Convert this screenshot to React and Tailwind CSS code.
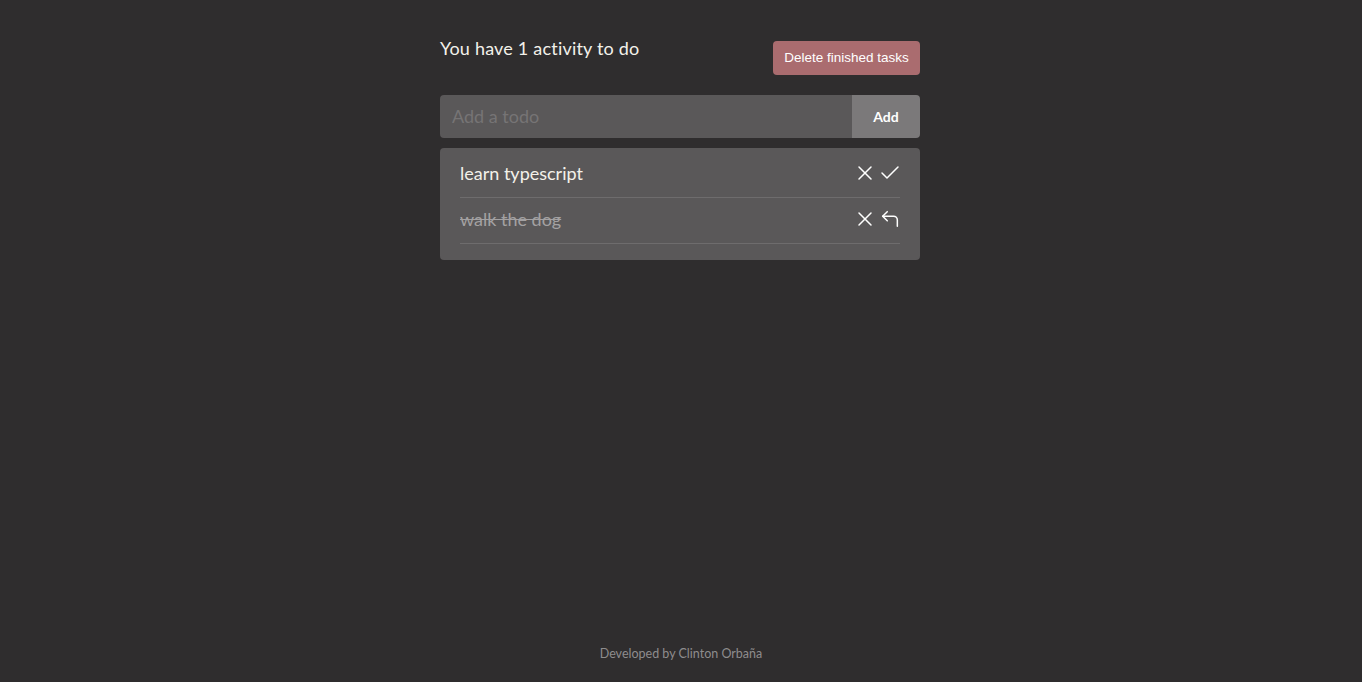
import React from "react";
import { X, Check, CornerUpLeft } from "lucide-react";

export default function App() {
  const font = { fontFamily: "Lato, 'Open Sans', sans-serif" };
  return (
    <div className="min-h-screen h-[682px] bg-[#2f2d2e] flex flex-col items-center" style={font}>
      <div className="w-[480px] mr-[2px] pt-[36px]">
        <div className="flex justify-between items-start">
          <h1 className="text-[18px] leading-[24px] text-[#f3f1ea] font-normal tracking-[0.2px]">
            You have 1 activity to do
          </h1>
          <button
            className="mt-[5px] h-[34px] w-[147px] rounded-[4px] bg-[#aa6c6f] text-white text-[13.5px]"
            style={{ fontFamily: "'Liberation Sans', Arial, sans-serif" }}
          >
            Delete finished tasks
          </button>
        </div>
        <div className="mt-[20px] flex h-[43px] rounded-[4px] overflow-hidden">
          <input
            className="flex-1 bg-[#5a5859] px-[12px] text-[18px] text-[#eeeeee] placeholder:text-[#767475] outline-none"
            placeholder="Add a todo"
          />
          <button className="w-[68px] bg-[#7b797a] text-white text-[14px] font-bold">Add</button>
        </div>
        <div className="mt-[10px] bg-[#5a5859] rounded-[4px] px-[20px] pt-[4px] pb-[16px]">
          <div className="flex items-center justify-between h-[46px] border-b border-[#6e6c6d]">
            <span className="text-[18px] text-[#f3f1ea] -mt-[2px]">learn typescript</span>
            <div className="flex items-center gap-[1px] text-white -mr-[2px] -mt-[4px]">
              <X size={24} strokeWidth={1.5} absoluteStrokeWidth />
              <Check size={24} strokeWidth={1.5} absoluteStrokeWidth />
            </div>
          </div>
          <div className="flex items-center justify-between h-[46px] border-b border-[#6e6c6d]">
            <span className="text-[18px] text-[#a3a1a2] line-through -mt-[2px]">walk the dog</span>
            <div className="flex items-center gap-[1px] text-white -mr-[2px] -mt-[4px]">
              <X size={24} strokeWidth={1.5} absoluteStrokeWidth />
              <CornerUpLeft size={22} strokeWidth={1.5} absoluteStrokeWidth className="ml-[1px] mr-[1px]" />
            </div>
          </div>
        </div>
      </div>
      <footer className="mt-auto pb-[18px] text-[12.5px] text-[#8e8c8d]">Developed by Clinton Orbaña</footer>
    </div>
  );
}
